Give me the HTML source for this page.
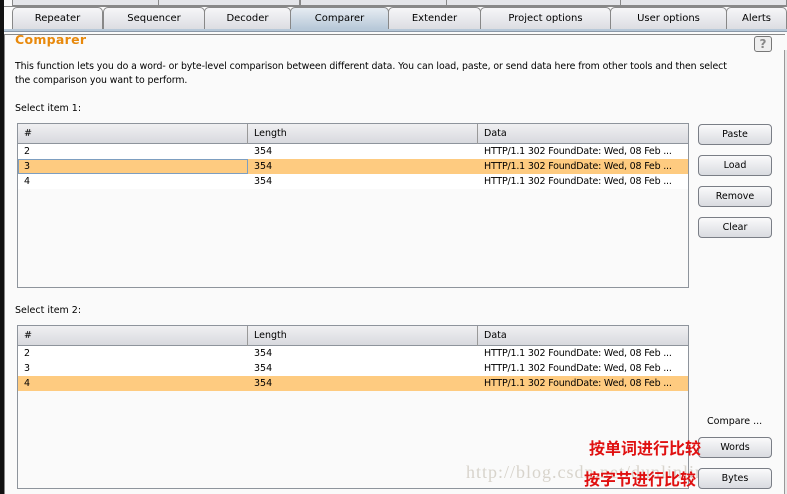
<!DOCTYPE html>
<html><head><meta charset="utf-8"><style>
*{margin:0;padding:0;box-sizing:border-box}
body{width:787px;height:494px;overflow:hidden;background:#fafafa;font-family:"DejaVu Sans","Liberation Sans",sans-serif;font-size:9.5px;color:#000;position:relative}
.a{position:absolute;white-space:nowrap}
.tab{position:absolute;height:22px;top:7px;border:1px solid #888;border-bottom:none;border-radius:5px 5px 0 0;background:linear-gradient(#f6f6f8,#dcdde2);text-align:center;line-height:21px;font-size:10px}
.ttop{position:absolute;top:-12px;height:18px;border:1px solid #888;border-radius:5px 5px 0 0;background:#e4e5e9;text-align:center;line-height:12px;font-size:10px;color:#333}
.tbl{position:absolute;left:17px;width:672px;border:1px solid #8e949c;background:#fafafa}
.hd{height:20px;background:linear-gradient(#f0f0f2,#d8d9de);border-bottom:1px solid #8e949c;position:relative}
.hd span,.row span{position:absolute;top:0;white-space:nowrap}
.row{height:15px;position:relative;background:#fff;line-height:15px}
.sel{background:#fecb80}
.btn{position:absolute;left:698px;width:74px;height:21px;border:1px solid #7a7e86;border-radius:4px;background:linear-gradient(#fafafb,#d9dbe0);text-align:center;line-height:19px;font-size:9.5px}
.cn{color:#e01010;font-family:"Noto Sans CJK SC",sans-serif;font-weight:bold;font-size:16px;position:absolute;white-space:nowrap}
</style></head><body>
<div class="a" style="left:0;top:0;width:4px;height:494px;background:#111"></div>
<div class="ttop" style="left:12px;width:147px">Target</div>
<div class="ttop" style="left:158px;width:142px">Proxy</div>
<div class="ttop" style="left:300px;width:147px">Spider</div>
<div class="ttop" style="left:446px;width:175px">Scanner</div>
<div class="ttop" style="left:620px;width:167px">Intruder</div>
<div class="a" style="left:4px;top:6px;width:783px;height:1px;background:#888"></div>
<div class="tab" style="left:12px;width:91px">Repeater</div>
<div class="tab" style="left:103px;width:102px">Sequencer</div>
<div class="tab" style="left:204px;width:87px">Decoder</div>
<div class="tab" style="left:290px;width:99px;background:linear-gradient(#e6ecf2,#b7c8d8)">Comparer</div>
<div class="tab" style="left:388px;width:93px">Extender</div>
<div class="tab" style="left:480px;width:131px">Project options</div>
<div class="tab" style="left:610px;width:117px">User options</div>
<div class="tab" style="left:726px;width:61px">Alerts</div>
<div class="a" style="left:4px;top:29px;width:783px;height:3px;background:#b7c8d8;border-bottom:1px solid #8a98a8"></div>
<div class="a" style="left:4px;top:34px;width:1px;height:460px;background:#888"></div>
<div class="a" style="left:5px;top:34px;width:780px;height:1px;background:#888"></div>
<div class="a" style="left:784px;top:50px;width:3px;height:444px;background:#e8e8e8;border-left:1px solid #999"></div>
<div class="a" style="left:15px;top:32px;color:#e8890c;font-weight:bold;font-size:12.5px;letter-spacing:.3px">Comparer</div>
<div class="a" style="left:754px;top:36px;width:18px;height:16px;border:1px solid #777;border-radius:3px;background:#eee;text-align:center;font-weight:bold;color:#888;font-size:12px;line-height:14px">?</div>
<div class="a" style="left:15px;top:60px;line-height:14px;font-size:9.4px;letter-spacing:-0.08px">This function lets you do a word- or byte-level comparison between different data. You can load, paste, or send data here from other tools and then select<br>the comparison you want to perform.</div>
<div class="a" style="left:15px;top:103px">Select item 1:</div>
<div class="tbl" style="top:123px;height:165px">
<div class="hd"><span style="left:6px;top:4px">#</span><span style="left:236px;top:4px">Length</span><span style="left:466px;top:4px">Data</span><div class="a" style="left:229px;top:0;width:1px;height:20px;background:#999"></div><div class="a" style="left:459px;top:0;width:1px;height:20px;background:#999"></div></div>
<div class="row"><span style="left:6px">2</span><span style="left:236px">354</span><span style="left:466px;letter-spacing:-0.2px">HTTP/1.1 302 FoundDate: Wed, 08 Feb ...</span></div>
<div class="row sel"><div class="a" style="left:0;top:0;width:230px;height:15px;border:1px solid #7d9ec0"></div><span style="left:6px">3</span><span style="left:236px">354</span><span style="left:466px;letter-spacing:-0.2px">HTTP/1.1 302 FoundDate: Wed, 08 Feb ...</span></div>
<div class="row"><span style="left:6px">4</span><span style="left:236px">354</span><span style="left:466px;letter-spacing:-0.2px">HTTP/1.1 302 FoundDate: Wed, 08 Feb ...</span></div>
</div>
<div class="btn" style="top:124px">Paste</div>
<div class="btn" style="top:155px">Load</div>
<div class="btn" style="top:186px">Remove</div>
<div class="btn" style="top:217px">Clear</div>
<div class="a" style="left:15px;top:305px">Select item 2:</div>
<div class="tbl" style="top:325px;height:164px">
<div class="hd"><span style="left:6px;top:4px">#</span><span style="left:236px;top:4px">Length</span><span style="left:466px;top:4px">Data</span><div class="a" style="left:229px;top:0;width:1px;height:20px;background:#999"></div><div class="a" style="left:459px;top:0;width:1px;height:20px;background:#999"></div></div>
<div class="row"><span style="left:6px">2</span><span style="left:236px">354</span><span style="left:466px;letter-spacing:-0.2px">HTTP/1.1 302 FoundDate: Wed, 08 Feb ...</span></div>
<div class="row"><span style="left:6px">3</span><span style="left:236px">354</span><span style="left:466px;letter-spacing:-0.2px">HTTP/1.1 302 FoundDate: Wed, 08 Feb ...</span></div>
<div class="row sel"><span style="left:6px">4</span><span style="left:236px">354</span><span style="left:466px;letter-spacing:-0.2px">HTTP/1.1 302 FoundDate: Wed, 08 Feb ...</span></div>
</div>
<div class="a" style="left:707px;top:416px">Compare ...</div>
<div class="a" style="left:466px;top:462px;font-family:'Liberation Serif',serif;font-size:18px;color:#d8d4cc;letter-spacing:1px">http://blog.csdn.net/dunlinlin</div>
<div class="btn" style="top:437px">Words</div>
<div class="btn" style="top:468px">Bytes</div>
<div class="cn" style="left:589px;top:435px">按单词进行比较</div>
<div class="cn" style="left:584px;top:466px">按字节进行比较</div>
</body></html>
